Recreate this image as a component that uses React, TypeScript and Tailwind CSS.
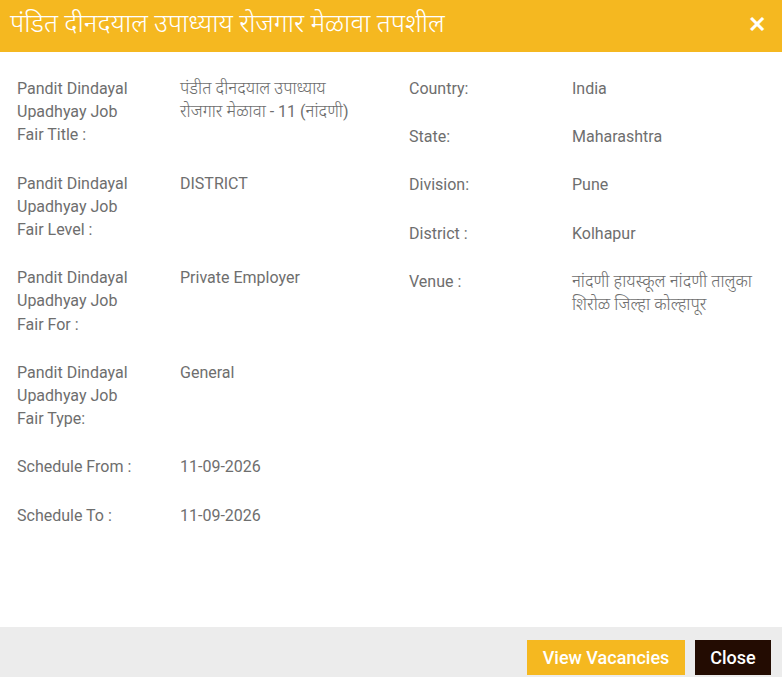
import React from "react";

const font = { fontFamily: 'Roboto, "Noto Sans Devanagari", "Noto Sans", sans-serif' };

function Row({ label, value }: { label: React.ReactNode; value: React.ReactNode }) {
  return (
    <div className="flex mb-[25px]">
      <div className="w-[163px] shrink-0 pr-3">{label}</div>
      <div className="flex-1 pr-2">{value}</div>
    </div>
  );
}

function Dev({ children }: { children: React.ReactNode }) {
  return <span className="text-[17px] font-light">{children}</span>;
}

export default function App() {
  return (
    <div className="w-[782px] h-[677px] bg-white flex flex-col overflow-hidden" style={font}>
      <div className="h-[52px] bg-[#f5b820] flex items-center justify-between pl-[10px] pr-[16px] shrink-0">
        <h1 className="text-white text-[26px] font-light leading-none -mt-[6px]">
          पंडित दीनदयाल उपाध्याय रोजगार मेळावा तपशील
        </h1>
        <span className="text-white text-[22px] font-bold leading-none -mt-[2px]">✕</span>
      </div>
      <div className="flex-1 flex pt-[25px] text-[16px] leading-[23.2px] text-[#6e6e6e]">
        <div className="w-[391px] pl-[17px]">
          <Row
            label={<>Pandit Dindayal<br />Upadhyay Job<br />Fair Title :</>}
            value={<><Dev>पंडीत दीनदयाल उपाध्याय</Dev><br /><Dev>रोजगार मेळावा</Dev> - 11 (<Dev>नांदणी</Dev>)</>}
          />
          <Row
            label={<>Pandit Dindayal<br />Upadhyay Job<br />Fair Level :</>}
            value="DISTRICT"
          />
          <Row
            label={<>Pandit Dindayal<br />Upadhyay Job<br />Fair For :</>}
            value="Private Employer"
          />
          <Row
            label={<>Pandit Dindayal<br />Upadhyay Job<br />Fair Type:</>}
            value="General"
          />
          <Row label="Schedule From :" value="11-09-2026" />
          <Row label="Schedule To :" value="11-09-2026" />
        </div>
        <div className="w-[391px] pl-[18px]">
          <Row label="Country:" value="India" />
          <Row label="State:" value="Maharashtra" />
          <Row label="Division:" value="Pune" />
          <Row label="District :" value="Kolhapur" />
          <Row
            label="Venue :"
            value={<><Dev>नांदणी हायस्कूल नांदणी तालुका</Dev><br /><Dev>शिरोळ जिल्हा कोल्हापूर</Dev></>}
          />
        </div>
      </div>
      <div className="h-[50px] bg-[#ececec] flex items-start justify-end gap-[10px] pt-[13px] pr-[11px] shrink-0">
        <button className="h-[35px] w-[158px] bg-[#f5b820] text-white text-[18px] font-medium">
          View Vacancies
        </button>
        <button className="h-[35px] w-[76px] bg-[#230c02] text-white text-[18px] font-medium">
          Close
        </button>
      </div>
    </div>
  );
}
